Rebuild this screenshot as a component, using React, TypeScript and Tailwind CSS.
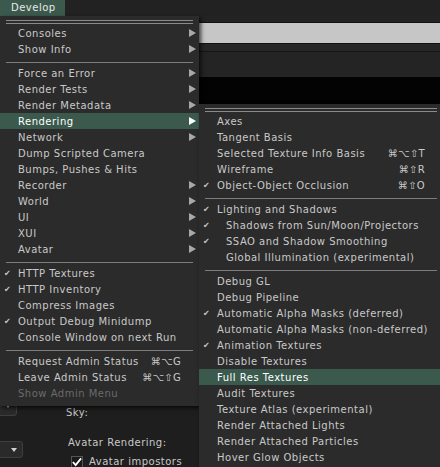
import React from 'react'

type Item =
  | { kind: 'tear' }
  | { kind: 'sep' }
  | {
      kind: 'item'
      label: string
      sub?: boolean
      check?: boolean
      shortcut?: string
      active?: boolean
      disabled?: boolean
      indent?: boolean
    }

const mainItems: Item[] = [
  { kind: 'tear' },
  { kind: 'item', label: 'Consoles', sub: true },
  { kind: 'item', label: 'Show Info', sub: true },
  { kind: 'sep' },
  { kind: 'item', label: 'Force an Error', sub: true },
  { kind: 'item', label: 'Render Tests', sub: true },
  { kind: 'item', label: 'Render Metadata', sub: true },
  { kind: 'item', label: 'Rendering', sub: true, active: true },
  { kind: 'item', label: 'Network', sub: true },
  { kind: 'item', label: 'Dump Scripted Camera' },
  { kind: 'item', label: 'Bumps, Pushes & Hits' },
  { kind: 'item', label: 'Recorder', sub: true },
  { kind: 'item', label: 'World', sub: true },
  { kind: 'item', label: 'UI', sub: true },
  { kind: 'item', label: 'XUI', sub: true },
  { kind: 'item', label: 'Avatar', sub: true },
  { kind: 'sep' },
  { kind: 'item', label: 'HTTP Textures', check: true },
  { kind: 'item', label: 'HTTP Inventory', check: true },
  { kind: 'item', label: 'Compress Images' },
  { kind: 'item', label: 'Output Debug Minidump', check: true },
  { kind: 'item', label: 'Console Window on next Run' },
  { kind: 'sep' },
  { kind: 'item', label: 'Request Admin Status', shortcut: '⌘⌥G' },
  { kind: 'item', label: 'Leave Admin Status', shortcut: '⌘⌥⇧G' },
  { kind: 'item', label: 'Show Admin Menu', disabled: true },
]

const renderingItems: Item[] = [
  { kind: 'tear' },
  { kind: 'item', label: 'Axes' },
  { kind: 'item', label: 'Tangent Basis' },
  { kind: 'item', label: 'Selected Texture Info Basis', shortcut: '⌘⌥⇧T' },
  { kind: 'item', label: 'Wireframe', shortcut: '⌘⇧R' },
  { kind: 'item', label: 'Object-Object Occlusion', shortcut: '⌘⇧O', check: true },
  { kind: 'sep' },
  { kind: 'item', label: 'Lighting and Shadows', check: true },
  { kind: 'item', label: 'Shadows from Sun/Moon/Projectors', check: true, indent: true },
  { kind: 'item', label: 'SSAO and Shadow Smoothing', check: true, indent: true },
  { kind: 'item', label: 'Global Illumination (experimental)', indent: true },
  { kind: 'sep' },
  { kind: 'item', label: 'Debug GL' },
  { kind: 'item', label: 'Debug Pipeline' },
  { kind: 'item', label: 'Automatic Alpha Masks (deferred)', check: true },
  { kind: 'item', label: 'Automatic Alpha Masks (non-deferred)' },
  { kind: 'item', label: 'Animation Textures', check: true },
  { kind: 'item', label: 'Disable Textures' },
  { kind: 'item', label: 'Full Res Textures', active: true },
  { kind: 'item', label: 'Audit Textures' },
  { kind: 'item', label: 'Texture Atlas (experimental)' },
  { kind: 'item', label: 'Render Attached Lights' },
  { kind: 'item', label: 'Render Attached Particles' },
  { kind: 'item', label: 'Hover Glow Objects' },
]

function Arrow({ active }: { active?: boolean }) {
  return (
    <svg width="7" height="8" viewBox="0 0 7 8" className="absolute right-[3px] top-1/2 -translate-y-1/2">
      <path d="M0 0 L7 4 L0 8 Z" fill={active ? '#ffffff' : '#a8a8a8'} />
    </svg>
  )
}

function MenuRow({ item }: { item: Item }) {
  if (item.kind === 'tear') {
    return (
      <div className="h-[9px] px-[6px] pt-[4px]">
        <div className="h-px bg-[#8a8a8a]" />
        <div className="h-px bg-[#8a8a8a] mt-[2px]" />
      </div>
    )
  }
  if (item.kind === 'sep') {
    return (
      <div className="h-2 px-[6px] pt-[5px]">
        <div className="h-px bg-[#7c7c7c]" />
      </div>
    )
  }
  const color = item.disabled ? 'text-[#6a6a6a]' : item.active ? 'text-white' : 'text-[#c9c9c9]'
  return (
    <div className={`relative h-4 flex items-center pr-[18px] ${item.active ? 'bg-[#3b5a4d]' : ''} ${color}`}>
      {item.check && (
        <span className="absolute left-[4px] top-[3px] text-[8px] leading-[12px] text-[#c9c9c9]">✔</span>
      )}
      <span className={`relative top-px whitespace-nowrap ${item.indent ? 'pl-[27px]' : 'pl-[18px]'}`}>{item.label}</span>
      {item.shortcut && <span className="relative top-px ml-auto whitespace-nowrap tracking-[0.3px]">{item.shortcut}</span>}
      {item.sub && <Arrow active={item.active} />}
    </div>
  )
}

function DropButton({ className }: { className: string }) {
  return (
    <div className={`relative border border-[#3e3e3e] bg-[#2a2a2a] rounded-[3px] ${className}`}>
      <svg width="6" height="4" viewBox="0 0 6 4" className="absolute right-[5px] top-1/2 -translate-y-1/2">
        <path d="M0 0 L6 0 L3 4 Z" fill="#d0d0d0" />
      </svg>
    </div>
  )
}

export default function App() {
  return (
    <div className="relative w-[440px] h-[467px] overflow-hidden bg-[#1e1e1e] font-['DejaVu_Sans',sans-serif] text-[10px] tracking-[0.5px] leading-none">
      {/* top menu bar */}
      <div className="h-4 flex bg-[#222222]">
        <div className="w-[65px] h-4 bg-[#3b5a4d] text-[#e8e8e8] flex items-center pl-[11px]">Develop</div>
      </div>

      {/* floater behind the menus */}
      <div className="h-[6px] bg-[#232323]" />
      <div className="h-px bg-[#111111]" />
      <div className="h-5 bg-[#c6c6c6]" />
      <div className="h-px bg-[#111111]" />
      <div className="h-[7px] bg-[#262626]" />
      <div className="h-px bg-[#151515]" />
      <div className="h-[25px] bg-[#242424]" />
      <div className="h-[27px] bg-[#030303]" />

      {/* lower panel */}
      <div className="pt-[292px] flex">
        <div className="w-[66px] flex flex-col">
          <DropButton className="-ml-[4px] w-[21px] h-[20px]" />
          <DropButton className="-ml-[4px] w-[27px] h-[17px] mt-[25px]" />
        </div>
        <div className="flex flex-col text-[#c9c9c9]">
          <div className="mt-[12px]">Sky:</div>
          <div className="mt-[20px] ml-[2px]">Avatar Rendering:</div>
          <div className="mt-[8px] ml-[5px] flex items-center gap-[6px]">
            <div className="w-[12px] h-[12px] bg-[#1a1a1a] border border-[#555] flex items-center justify-center">
              <svg width="11" height="10" viewBox="0 0 11 10">
                <path d="M1 5 L4 8.5 L10 1" stroke="#ffffff" strokeWidth="2" fill="none" />
              </svg>
            </div>
            <span>Avatar impostors</span>
          </div>
        </div>
      </div>

      {/* Develop menu */}
      <div className="absolute left-0 top-4 w-[199px] pb-[5px] bg-[#2b2b2b] shadow-[2px_2px_4px_rgba(0,0,0,0.7)]">
        {mainItems.map((it, i) => (
          <MenuRow key={i} item={it} />
        ))}
      </div>

      {/* Rendering submenu */}
      <div className="absolute left-[199px] top-[104px] w-[244px] pb-[5px] bg-[#2b2b2b] shadow-[2px_2px_4px_rgba(0,0,0,0.7)]">
        {renderingItems.map((it, i) => (
          <MenuRow key={i} item={it} />
        ))}
      </div>
    </div>
  )
}
